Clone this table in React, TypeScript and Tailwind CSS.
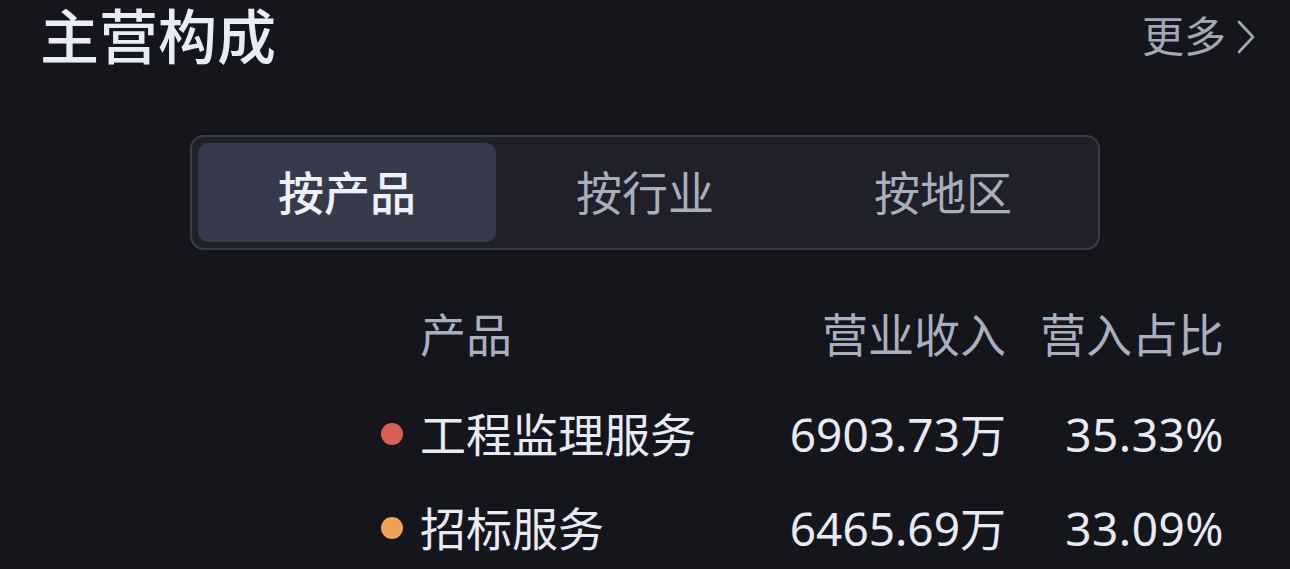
const tabs = ["按产品", "按行业", "按地区"];

const rows = [
    { dot: "bg-[#d95f59]", name: "工程监理服务", amount: "6903.73万", ratio: "35.33%", gap: "mt-[42px]" },
    { dot: "bg-[#f0a155]", name: "招标服务", amount: "6465.69万", ratio: "33.09%", gap: "mt-[36px]" },
];

const font = "font-['Noto_Sans','Noto_Sans_CJK_SC',sans-serif]";

export default function App() {
    return (
        <div className={`h-[569px] w-[1290px] overflow-hidden bg-[#15161c] ${font}`}>
            <header className="flex items-start justify-between pl-[40px] pr-[34px]">
                <h1 className="text-[59px] font-medium leading-[72px] text-[#e9ebf8]">主营构成</h1>
                <button className="mt-[10px] flex items-center gap-[10px] text-[42px] leading-[52px] text-[#a3a8b6]">
                    更多
                    <svg width="20" height="36" viewBox="0 0 20 36" fill="none" className="mt-[2px]">
                        <path d="M3 3 L17 18 L3 33" stroke="#a3a8b6" strokeWidth="2.6" strokeLinecap="round" strokeLinejoin="round" />
                    </svg>
                </button>
            </header>

            <div className="mx-auto mt-[63px] flex w-[910px] rounded-[14px] border-2 border-[#383b4a] bg-[#1f2029] p-[6px]">
                {tabs.map((tab, i) => (
                    <div
                        key={tab}
                        className={
                            i === 0
                                ? "flex h-[99px] flex-1 items-center justify-center rounded-[10px] bg-[#373a4b] text-[46px] font-medium text-[#eef0fd]"
                                : "flex h-[99px] flex-1 items-center justify-center text-[46px] text-[#a9aebb]"
                        }
                    >
                        {tab}
                    </div>
                ))}
            </div>

            <div className="ml-[381px] mt-[55px] w-[843px]">
                <div className="flex h-[58px] items-center text-[46px] text-[#a9afbf]">
                    <span className="w-[39px]" />
                    <span className="flex-1">产品</span>
                    <span>营业收入</span>
                    <span className="w-[218px] text-right">营入占比</span>
                </div>
                {rows.map((r) => (
                    <div key={r.name} className={`${r.gap} flex h-[58px] items-center text-[#e8eaf4]`}>
                        <span className="w-[39px]">
                            <span className={`block h-[22px] w-[22px] rounded-full ${r.dot}`} />
                        </span>
                        <span className="flex-1 text-[46px]">{r.name}</span>
                        <span className="text-[46px]">{r.amount}</span>
                        <span className="w-[218px] text-right text-[46px] tracking-[0.5px]">{r.ratio}</span>
                    </div>
                ))}
            </div>
        </div>
    );
}
